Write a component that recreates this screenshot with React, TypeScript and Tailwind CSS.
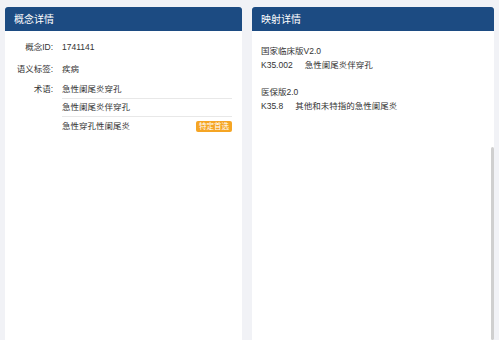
import React from 'react';

const terms = [
  { text: '急性阑尾炎穿孔', preferred: false },
  { text: '急性阑尾炎伴穿孔', preferred: false },
  { text: '急性穿孔性阑尾炎', preferred: true },
];

const mappings = [
  { version: '国家临床版V2.0', code: 'K35.002', name: '急性阑尾炎伴穿孔' },
  { version: '医保版2.0', code: 'K35.8', name: '其他和未特指的急性阑尾炎' },
];

const PanelHeader: React.FC<{ title: string }> = ({ title }) => (
  <div className="h-[24px] bg-[#1c4b82] rounded-t-[3px] flex items-center pl-[9px] text-white text-[10px]">
    {title}
  </div>
);

export default function App() {
  return (
    <div
      className="w-[499px] h-[340px] overflow-hidden bg-[#f1f2f6] flex gap-[10px] pt-[7px] pl-[5px] pr-[5px] text-[#333333]"
      style={{ fontFamily: '"Liberation Sans", "Noto Sans CJK SC", sans-serif' }}
    >
      {/* 概念详情 */}
      <div className="w-[237px] flex flex-col bg-white">
        <PanelHeader title="概念详情" />
        <div className="flex flex-col text-[8.5px]">
          <div className="mt-[7px] h-[18px] flex items-center">
            <div className="w-[48px] text-right">概念ID:</div>
            <div className="ml-[9px]">1741141</div>
          </div>
          <div className="mt-[4px] h-[18px] flex items-center">
            <div className="w-[48px] text-right">语义标签:</div>
            <div className="ml-[9px]">疾病</div>
          </div>
          <div className="mt-[3px] flex">
            <div className="w-[48px] h-[17px] flex items-center justify-end">术语:</div>
            <div className="ml-[9px] w-[170px] flex flex-col">
              {terms.map((t, i) => (
                <div
                  key={t.text}
                  className={
                    'h-[18px] flex items-center justify-between ' +
                    (i < terms.length - 1 ? 'border-b border-[#e8e8e8]' : '')
                  }
                >
                  <span>{t.text}</span>
                  {t.preferred && (
                    <span className="h-[11px] px-[3px] rounded-[2px] bg-[#f5a524] text-white text-[7.5px] leading-[11px]">
                      特定首选
                    </span>
                  )}
                </div>
              ))}
            </div>
          </div>
        </div>
      </div>

      {/* 映射详情 */}
      <div className="relative w-[242px] flex flex-col bg-white">
        <PanelHeader title="映射详情" />
        <div className="flex flex-col gap-[13px] pt-[13px] pl-[9px] text-[8.5px] leading-[14px]">
          {mappings.map((m) => (
            <div key={m.code}>
              <div>{m.version}</div>
              <div className="flex">
                <span>{m.code}</span>
                <span className="ml-[12px]">{m.name}</span>
              </div>
            </div>
          ))}
        </div>
        <div className="absolute right-[0px] top-[140px] bottom-0 w-[3px] bg-[#cfcfcf] rounded-full" />
      </div>
    </div>
  );
}
